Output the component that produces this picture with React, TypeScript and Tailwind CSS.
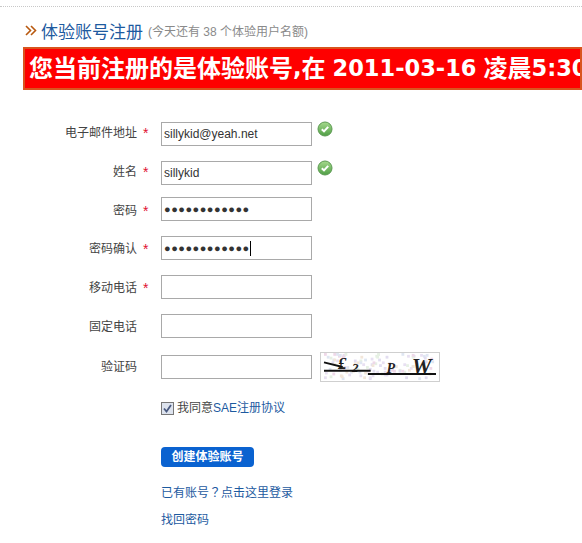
const font = "font-['Liberation_Sans','Noto_Sans_CJK_SC',sans-serif]";

function Check() {
  return (
    <svg width="16" height="16" viewBox="0 0 16 16" className="ml-[5px] mt-[-1px] shrink-0">
      <defs>
        <linearGradient id="ok" x1="0" y1="0" x2="0" y2="1">
          <stop offset="0" stopColor="#a5d98c" />
          <stop offset="1" stopColor="#4f9e45" />
        </linearGradient>
      </defs>
      <circle cx="8" cy="8" r="7" fill="url(#ok)" stroke="#5c9a52" strokeWidth="1" />
      <path d="M4.8 8.2 7 10.4 11.2 5.8" fill="none" stroke="#fff" strokeWidth="2" />
    </svg>
  );
}

const noiseColors = ['#eed8e8', '#dfe6f2', '#e6f0e4', '#e8e0f2', '#f2e6da', '#e2ddf0'];

function Captcha() {
  // speckle background, scattered with a small hash so it doesn't line up
  const dots = Array.from({ length: 110 }, (_, i) => {
    const a = Math.sin(i * 12.9898) * 43758.5453;
    const b = Math.sin(i * 78.233) * 12543.1234;
    return {
      x: Math.floor((a - Math.floor(a)) * 116),
      y: Math.floor((b - Math.floor(b)) * 27),
      c: noiseColors[i % noiseColors.length],
    };
  });
  return (
    <svg width="120" height="30" viewBox="0 0 120 30" className="ml-2 mt-[-3px] shrink-0 border border-[#cfcfcf] bg-white">
      {dots.map((d, i) => (
        <rect key={i} x={d.x} y={d.y} width="3" height="3" fill={d.c} />
      ))}
      <g fontFamily="Liberation Serif, serif" fontWeight="bold" fontStyle="italic" fill="#222">
        <text x="15" y="17" fontSize="18">£</text>
        <text x="30" y="20" fontSize="14">2</text>
        <text x="67" y="21" fontSize="15">P</text>
        <text x="94" y="23" fontSize="24">W</text>
      </g>
      <path d="M0 10 20 15M0 19H50M47 22.5H120" stroke="#111" strokeWidth="2" fill="none" />
    </svg>
  );
}

const rows = [
  { label: '电子邮件地址', star: true, value: 'sillykid@yeah.net', ok: true, top: 'mt-0', labelTop: 'pt-[3px]' },
  { label: '姓名', star: true, value: 'sillykid', ok: true, top: 'mt-[15px]', labelTop: 'pt-[3px]' },
  { label: '密码', star: true, dots: true, top: 'mt-3', labelTop: 'pt-[6px]' },
  { label: '密码确认', star: true, dots: true, caret: true, top: 'mt-[15px]', labelTop: 'pt-[5px]' },
  { label: '移动电话', star: true, top: 'mt-[15px]', labelTop: 'pt-[5px]' },
  { label: '固定电话', top: 'mt-[15px]', labelTop: 'pt-[5px]' },
  { label: '验证码', captcha: true, top: 'mt-[17px]', labelTop: 'pt-[4px]' },
];

export default function App() {
  return (
    <div className={`h-[543px] w-[582px] overflow-hidden bg-white ${font}`}>
      <div className="pt-[6px]">
        <div className="border-t border-dotted border-[#c8c8c8]" />
      </div>

      <div className="ml-[25px] mt-[13px] flex h-[24px] items-center whitespace-nowrap">
        <svg width="16" height="12" viewBox="0 0 16 12" className="mt-[-3px] shrink-0">
          <path d="M1 1 5.5 5.5 1 10M6 1 10.5 5.5 6 10" fill="none" stroke="#b8590f" strokeWidth="1.6" />
        </svg>
        <h1 className="text-[17px] font-normal leading-none text-[#1d5a9f]">体验账号注册</h1>
        <span className="ml-[5px] text-[12px] text-[#8a8a8a]">(今天还有 38 个体验用户名额)</span>
      </div>

      <div className="ml-[23px] mt-[3px] flex h-[43px] items-center overflow-hidden whitespace-nowrap border-2 border-[#d9541e] bg-[#fe0000] pl-[4px] text-[24px] font-bold text-white">
        您当前注册的是体验账号
        <span className="font-['DejaVu_Sans',sans-serif] text-[22.5px]">,</span>
        在
        <span className="ml-[7px] font-['DejaVu_Sans',sans-serif] text-[22.5px]">2011-03-16</span>
        <span className="ml-[7px]">凌晨</span>
        <span className="font-['DejaVu_Sans',sans-serif] text-[22.5px]">5:30</span>
      </div>

      <form className="mt-[32px]">
        {rows.map(r => (
          <div key={r.label} className={`flex items-start ${r.top}`}>
            <div className={`flex h-[24px] w-[161px] shrink-0 items-start justify-end pr-[12px] text-[12px] leading-[16px] text-[#444] ${r.labelTop}`}>
              <span>{r.label}</span>
              <span className={`ml-[6px] w-[6px] text-[14px] leading-[16px] text-[#e01030] ${r.star ? '' : 'invisible'}`}>*</span>
            </div>
            <div className="flex h-[24px] w-[151px] shrink-0 items-center border border-[#a9a9a9] bg-white pl-[2px] text-[12px] text-[#333]">
              {r.value}
              {r.dots && <span className="text-[11px] tracking-[0.5px] text-[#333]">●●●●●●●●●●●●</span>}
              {r.caret && <span className="h-[15px] w-px bg-black" />}
            </div>
            {r.ok && <Check />}
            {r.captcha && <Captcha />}
          </div>
        ))}

        <div className="ml-[161px] mt-[17px] flex items-center text-[12px] text-[#444]">
          <span className="flex h-[13px] w-[13px] items-center justify-center border border-[#777] bg-[#dde3ee]">
            <svg width="9" height="9" viewBox="0 0 9 9">
              <path d="M1 4.5 3.5 7.5 8 1" fill="none" stroke="#4a5a80" strokeWidth="1.8" />
            </svg>
          </span>
          <span className="ml-[3px]">我同意</span>
          <a className="text-[#1d5a9f]">SAE注册协议</a>
        </div>

        <button type="button" className="ml-[161px] mt-[30px] block h-[20px] w-[93px] rounded-[4px] bg-[#0a62d0] text-[12px] font-bold text-white">
          创建体验账号
        </button>

        <a className="ml-[161px] mt-[17px] block text-[12px] leading-[16px] text-[#1d5a9f]">
          已有账号<span className="font-['Noto_Sans_CJK_JP',sans-serif]">？</span>点击这里登录
        </a>
        <a className="ml-[161px] mt-[11px] block text-[12px] leading-[16px] text-[#1d5a9f]">找回密码</a>
      </form>
    </div>
  );
}
